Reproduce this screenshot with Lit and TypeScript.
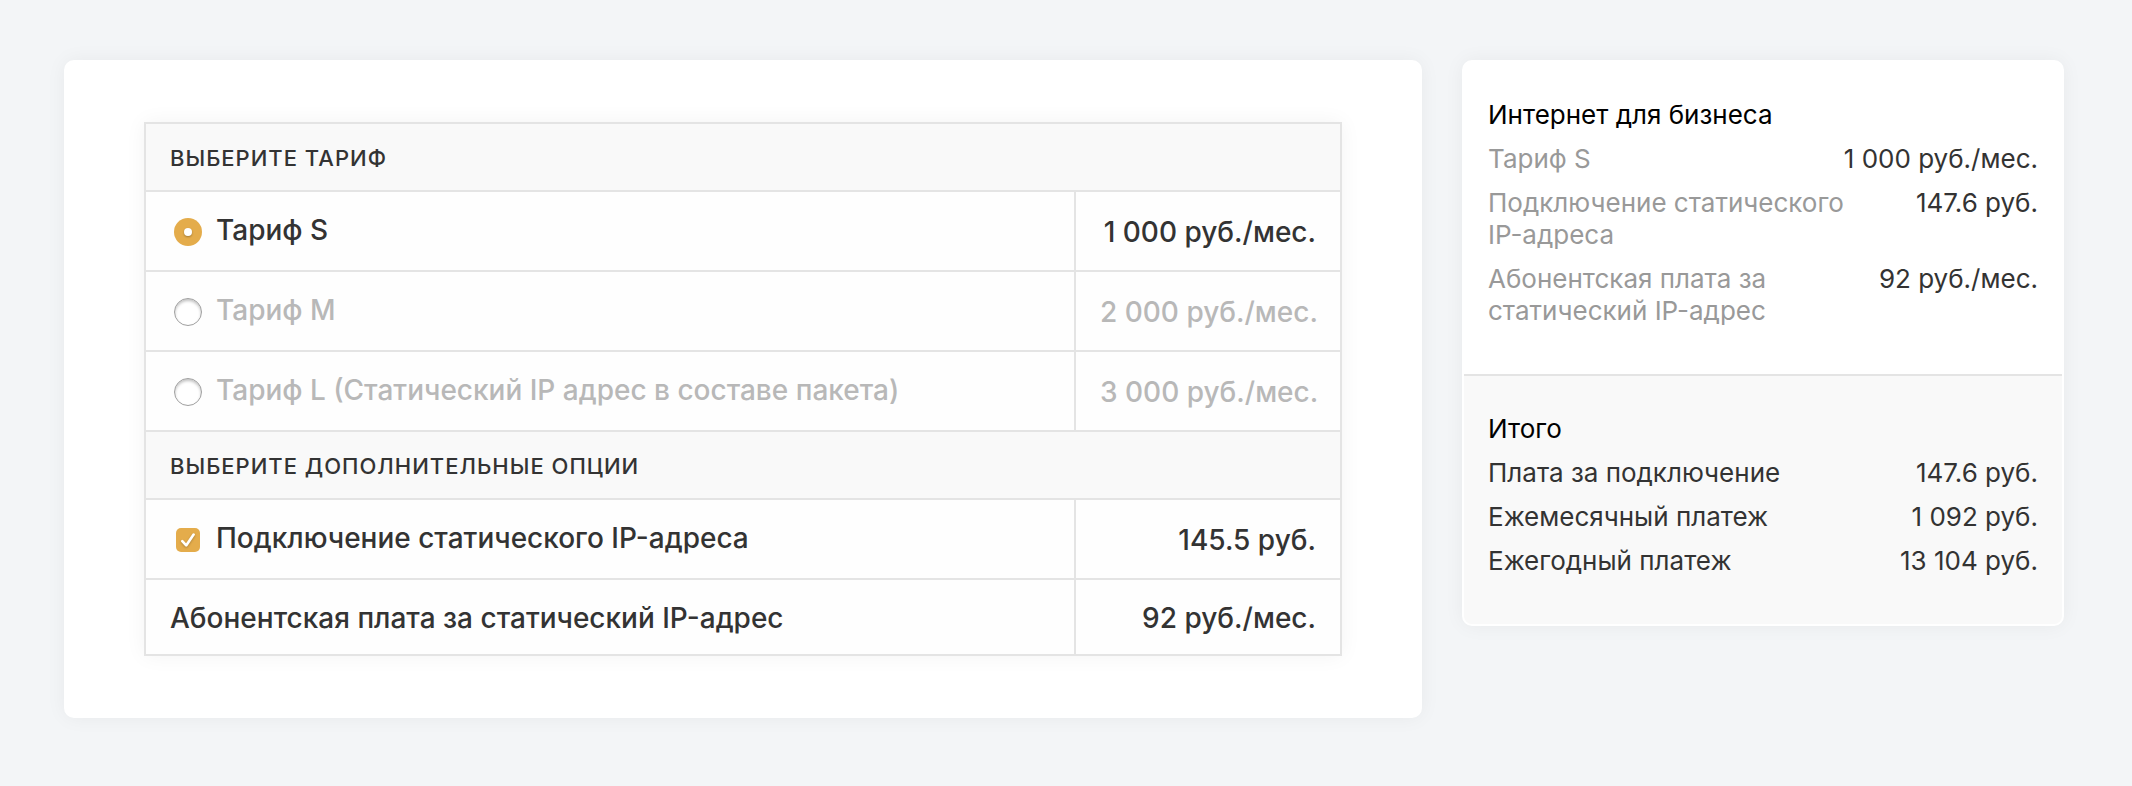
import { LitElement, html, css, nothing } from "lit";
import { customElement, state } from "lit/decorators.js";
import { classMap } from "lit/directives/class-map.js";

interface Tariff {
  id: string;
  name: string;
  price: string;
}

interface Line {
  name: string;
  price: string;
}

const TARIFFS: Tariff[] = [
  { id: "s", name: "Тариф S", price: "1 000 руб./мес." },
  { id: "m", name: "Тариф M", price: "2 000 руб./мес." },
  { id: "l", name: "Тариф L (Статический IP адрес в составе пакета)", price: "3 000 руб./мес." },
];

const ORDER: Line[] = [
  { name: "Тариф S", price: "1 000 руб./мес." },
  { name: "Подключение статического IP-адреса", price: "147.6 руб." },
  { name: "Абонентская плата за статический IP-адрес", price: "92 руб./мес." },
];

const TOTALS: Line[] = [
  { name: "Плата за подключение", price: "147.6 руб." },
  { name: "Ежемесячный платеж", price: "1 092 руб." },
  { name: "Ежегодный платеж", price: "13 104 руб." },
];

@customElement("tariff-table")
export class TariffTable extends LitElement {
  static styles = css`
    :host {
      display: block;
    }
    .table {
      width: 100%;
      border-collapse: collapse;
      table-layout: fixed;
      background: #fefefe;
      box-shadow: 0 0 20px rgba(0, 0, 0, 0.05);
      color: #333;
      font-size: 28px;
      font-weight: 500;
      line-height: 34px;
    }
    .price-col {
      width: 266px;
    }
    .heading,
    .cell {
      border: 2px solid #e4e4e4;
      text-align: left;
    }
    .heading {
      padding: 21px 24px 19px;
      background: #f9f9f9;
      font-size: 22px;
      font-weight: 500;
      line-height: 26px;
      letter-spacing: 1px;
      text-transform: uppercase;
    }
    .cell {
      padding: 22px 24px;
      font-weight: 500;
    }
    .price {
      padding: 23px 24px 21px;
      text-align: right;
      white-space: nowrap;
    }
    .plain .cell {
      padding: 21px 24px 19px;
    }
    .muted {
      color: #b8b8b8;
    }
    .choice {
      display: flex;
      align-items: center;
      gap: 14px;
      padding-bottom: 2px;
      line-height: 32px;
      cursor: pointer;
    }
    .control {
      appearance: none;
      flex: none;
      display: grid;
      place-items: center;
      box-sizing: border-box;
      cursor: pointer;
    }
    .radio {
      width: 28px;
      height: 28px;
      margin: 4px 0 0 4px;
      border: 1px solid #a0a0a0;
      border-radius: 50%;
      background: #fff;
      box-shadow: inset 0 2px 3px rgba(0, 0, 0, 0.24);
    }
    .radio:checked {
      border: 0;
      background: #e4ac4b;
      box-shadow: none;
    }
    .radio:checked::before {
      content: "";
      width: 8px;
      height: 8px;
      border-radius: 50%;
      background: #fff;
      box-shadow: 0 1px 2px rgba(0, 0, 0, 0.3);
    }
    .tick {
      display: grid;
      padding: 4px 2px 0 6px;
    }
    .checkbox {
      grid-area: 1 / 1;
      width: 24px;
      height: 24px;
      margin: 0;
      border: 1px solid #a0a0a0;
      border-radius: 5px;
      background: #fff;
    }
    .checkbox:checked {
      border: 0;
      background: #e4ac4b;
    }
    .mark {
      grid-area: 1 / 1;
      width: 24px;
      height: 24px;
      fill: none;
      stroke: #fff;
      stroke-width: 2.6;
      stroke-linecap: round;
      stroke-linejoin: round;
      filter: drop-shadow(0 1px 1px rgba(0, 0, 0, 0.25));
      pointer-events: none;
    }
  `;

  @state() private selected = "s";
  @state() private staticIp = true;

  private renderTariff(t: Tariff) {
    const muted = { muted: t.id !== this.selected };
    return html`
      <tr>
        <td class=${classMap({ cell: true, ...muted })}>
          <label class="choice">
            <input
              class="control radio"
              type="radio"
              name="tariff"
              .value=${t.id}
              .checked=${t.id === this.selected}
              @change=${() => (this.selected = t.id)}
            />
            <span>${t.name}</span>
          </label>
        </td>
        <td class=${classMap({ cell: true, price: true, ...muted })}>${t.price}</td>
      </tr>
    `;
  }

  render() {
    return html`
      <table class="table">
        <colgroup>
          <col />
          <col class="price-col" />
        </colgroup>
        <tbody>
          <tr><th class="heading" colspan="2" scope="colgroup">Выберите тариф</th></tr>
          ${TARIFFS.map((t) => this.renderTariff(t))}
        </tbody>
        <tbody>
          <tr><th class="heading" colspan="2" scope="colgroup">Выберите дополнительные опции</th></tr>
          <tr>
            <td class="cell">
              <label class="choice">
                <span class="tick">
                  <input
                    class="control checkbox"
                    type="checkbox"
                    .checked=${this.staticIp}
                    @change=${() => (this.staticIp = !this.staticIp)}
                  />
                  ${this.staticIp
                    ? html`<svg class="mark" viewBox="0 0 24 24" aria-hidden="true">
                        <path d="M6.3 13.2 10.2 17.4 17.6 6.6" />
                      </svg>`
                    : nothing}
                </span>
                <span>Подключение статического IP-адреса</span>
              </label>
            </td>
            <td class="cell price">145.5 руб.</td>
          </tr>
          <tr class="plain">
            <td class="cell">Абонентская плата за статический IP-адрес</td>
            <td class="cell price">92 руб./мес.</td>
          </tr>
        </tbody>
      </table>
    `;
  }
}

@customElement("order-summary")
export class OrderSummary extends LitElement {
  static styles = css`
    :host {
      display: block;
      color: #333;
      font-size: 26px;
      line-height: 32px;
    }
    .section {
      display: flex;
      flex-direction: column;
      gap: 12px;
      padding: 37px 24px 47px;
    }
    .totals {
      border-top: 2px solid #e4e4e4;
      border-radius: 0 0 8px 8px;
      background: #f9f9f9;
    }
    .title {
      margin: 0;
      color: #000;
      font-size: 26px;
      font-weight: 400;
    }
    .list {
      display: flex;
      flex-direction: column;
      gap: 12px;
      margin: 0;
    }
    .line {
      display: flex;
      justify-content: space-between;
      gap: 40px;
    }
    .name {
      max-width: 360px;
    }
    .order .name {
      color: #999;
    }
    .value {
      margin: 0;
      white-space: nowrap;
    }
  `;

  private renderList(lines: Line[]) {
    return html`
      <dl class="list">
        ${lines.map(
          (l) => html`
            <div class="line">
              <dt class="name">${l.name}</dt>
              <dd class="value">${l.price}</dd>
            </div>
          `
        )}
      </dl>
    `;
  }

  render() {
    return html`
      <section class="section order">
        <h2 class="title">Интернет для бизнеса</h2>
        ${this.renderList(ORDER)}
      </section>
      <section class="section totals">
        <h2 class="title">Итого</h2>
        ${this.renderList(TOTALS)}
      </section>
    `;
  }
}

@customElement("app-root")
export class AppRoot extends LitElement {
  static styles = css`
    :host {
      display: block;
      box-sizing: border-box;
      min-height: 100vh;
      padding: 60px 68px 60px 64px;
      background: #f3f5f7;
      font-family: Inter, "Noto Sans", sans-serif;
    }
    .layout {
      display: flex;
      align-items: flex-start;
      gap: 40px;
    }
    .card {
      box-sizing: border-box;
      border-radius: 10px;
      background: #fff;
      box-shadow: 0 0 20px rgba(0, 0, 0, 0.05);
    }
    .main {
      flex: 1;
      min-width: 0;
      padding: 62px 80px;
    }
    .side {
      flex: none;
      width: 602px;
      padding: 2px;
    }
  `;

  render() {
    return html`
      <div class="layout">
        <main class="card main"><tariff-table></tariff-table></main>
        <aside class="card side"><order-summary></order-summary></aside>
      </div>
    `;
  }
}
